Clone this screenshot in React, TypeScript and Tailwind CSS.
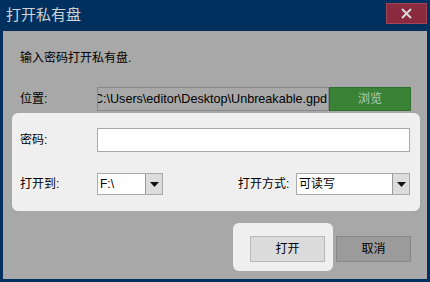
import React from 'react';

const font = "font-['Liberation_Sans','Noto_Sans_CJK_SC',sans-serif]";

const Select: React.FC<{ value: string; width: string }> = ({value, width}) => (
    <div className={`${width} h-[22px] bg-white border border-[#a9a9a9] flex items-center`}>
        <span className="flex-1 pl-[2px] text-[12px] text-black leading-none">{value}</span>
        <div className="w-[17px] h-full bg-[#dcdcdc] border-l border-[#9a9a9a] flex items-center justify-center">
            <svg width="9" height="5" viewBox="0 0 9 5">
                <path d="M0 0 H9 L4.5 5 Z" fill="#111"/>
            </svg>
        </div>
    </div>
);

const App: React.FC = () => {
    return (
        <div className={`w-[430px] h-[282px] bg-[#00305e] flex flex-col ${font}`}>
            {/* Title bar */}
            <div className="h-[31px] flex justify-between">
                <span className="pl-[6px] pt-[4px] text-[15px] text-[#cfd3d8] leading-[22px]">打开私有盘</span>
                <div className="mt-[3px] mr-[3px] w-[41px] h-[21px] bg-[#8a2a3e] border border-[#a34457] flex items-center justify-center">
                    <svg width="11" height="11" viewBox="0 0 11 11">
                        <path d="M1 1 L10 10 M10 1 L1 10" stroke="#d8d8d8" strokeWidth="2"/>
                    </svg>
                </div>
            </div>

            {/* Body */}
            <div className="flex-1 mx-[3px] mb-[3px] bg-[#a8a8a8] flex flex-col">
                <p className="mt-[20px] pl-[17px] text-[12px] leading-[14px] text-black">输入密码打开私有盘.</p>

                <div className="mt-[22px] flex items-center h-[24px]">
                    <span className="w-[94px] pl-[17px] text-[12px] text-black">位置:</span>
                    <div className="w-[232px] h-[24px] border border-[#888] bg-[#a8a8a8] overflow-hidden flex justify-end items-center">
                        <span className="whitespace-nowrap text-[12.6px] text-black pr-[1px]">C:\Users\editor\Desktop\Unbreakable.gpd</span>
                    </div>
                    <div className="w-[82px] h-[24px] bg-[#3a8236] border border-[#2f6e2c] flex items-center justify-center text-[12px] text-[#b8ccb6]">浏览</div>
                </div>

                <div className="mt-[2px] ml-[9px] w-[408px] h-[98px] bg-[#f0eff0] rounded-[6px] flex flex-col">
                    <div className="mt-[15px] flex items-center h-[24px]">
                        <span className="w-[85px] pl-[8px] text-[12px] text-black">密码:</span>
                        <div className="w-[313px] h-[24px] bg-white border border-[#aaa]"/>
                    </div>
                    <div className="mt-[21px] flex items-center h-[22px]">
                        <span className="w-[85px] pl-[8px] text-[12px] text-black">打开到:</span>
                        <Select value="F:\" width="w-[66px]"/>
                        <span className="ml-[75px] w-[58px] text-[12px] text-black">打开方式:</span>
                        <Select value="可读写" width="w-[114px]"/>
                    </div>
                </div>

                <div className="mt-[12px] flex items-start">
                    <div className="ml-[230px] w-[100px] h-[48px] bg-[#f0eff0] rounded-[6px] flex items-start">
                        <div className="mt-[13px] ml-[17px] w-[75px] h-[26px] bg-[#dcdbdc] border border-[#b8b8b8] flex items-center justify-center text-[12px] text-black">打开</div>
                    </div>
                    <div className="mt-[13px] ml-[3px] w-[75px] h-[26px] bg-[#9b9b9b] border border-[#888] flex items-center justify-center text-[12px] text-black">取消</div>
                </div>
            </div>
        </div>
    );
};

export default App;
